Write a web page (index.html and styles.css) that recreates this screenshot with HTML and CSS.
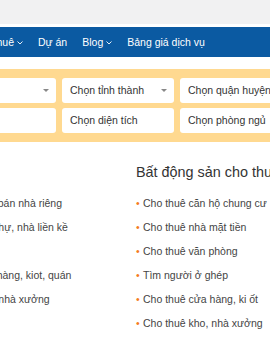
FILE: index.html
```html
<!DOCTYPE html>
<html lang="vi">
<head>
<meta charset="utf-8">
<link rel="stylesheet" href="styles.css">
</head>
<body>
<div class="topbar"></div>
<nav class="nav">
  <div class="nav-cut">
    <span class="nav-item">Nhà đất cho thuê<svg class="chev" width="6" height="4" viewBox="0 0 6 4"><path d="M0.5 0.5 L3 3 L5.5 0.5" fill="none" stroke="#fff" stroke-width="0.9"/></svg></span>
  </div>
  <span class="nav-item">Dự án</span>
  <span class="nav-item">Blog<svg class="chev" width="6" height="4" viewBox="0 0 6 4"><path d="M0.5 0.5 L3 3 L5.5 0.5" fill="none" stroke="#fff" stroke-width="0.9"/></svg></span>
  <span class="nav-item">Bảng giá dịch vụ</span>
</nav>
<section class="search">
  <div class="wrap">
    <div class="row">
      <div class="field">Loại BĐS<span class="caret"></span></div>
      <div class="field">Chọn tỉnh thành<span class="caret"></span></div>
      <div class="field">Chọn quận huyện<span class="caret"></span></div>
    </div>
    <div class="row">
      <div class="field">Mức giá</div>
      <div class="field">Chọn diện tích</div>
      <div class="field">Chọn phòng ngủ</div>
    </div>
  </div>
</section>
<section class="links">
  <div class="wrap cols">
    <div class="col col-left">
      <div class="title-space"></div>
      <ul class="list">
        <li>Mua đất, bán nhà riêng</li>
        <li>Bán biệt thự, nhà liền kề</li>
        <li>Bán đất</li>
        <li>Bán cửa hàng, kiot, quán</li>
        <li>Bán kho, nhà xưởng</li>
      </ul>
    </div>
    <div class="col">
      <h2 class="title">Bất động sản cho thuê</h2>
      <ul class="list">
        <li>Cho thuê căn hộ chung cư</li>
        <li>Cho thuê nhà mặt tiền</li>
        <li>Cho thuê văn phòng</li>
        <li>Tìm người ở ghép</li>
        <li>Cho thuê cửa hàng, ki ốt</li>
        <li>Cho thuê kho, nhà xưởng</li>
      </ul>
    </div>
  </div>
</section>
</body>
</html>
```
FILE: styles.css
```css
html, body {
  margin: 0;
  padding: 0;
  background: #fff;
  overflow: hidden;
}
body {
  font-family: "Liberation Sans", Arial, sans-serif;
  font-size: 10.5px;
  color: #333;
  width: 270px;
}
.topbar {
  height: 24px;
  background: #f1f1f2;
  margin-bottom: 3px;
}
.nav {
  height: 30px;
  background: #0b5aa2;
  display: flex;
  align-items: center;
  gap: 15px;
  color: #fff;
  font-size: 10.5px;
  white-space: nowrap;
}
.nav-cut {
  width: 23px;
  flex: none;
  display: flex;
  justify-content: flex-end;
}
.nav-item {
  display: flex;
  align-items: center;
  flex: none;
}
.chev {
  margin-left: 3px;
  margin-top: 1px;
}
.search {
  margin-top: 12px;
  background: #ffd990;
  padding: 9px 0 9px;
}
.wrap {
  margin-left: -56px;
  width: 480px;
}
.row {
  display: flex;
  gap: 6px;
}
.row + .row {
  margin-top: 5px;
}
.field {
  width: 112px;
  height: 25px;
  line-height: 25px;
  background: #fff;
  border-radius: 3px;
  padding-left: 8px;
  box-sizing: border-box;
  color: #333;
  font-size: 10.5px;
  display: flex;
  align-items: center;
  white-space: nowrap;
  overflow: hidden;
}
.caret {
  margin-left: auto;
  margin-right: 7px;
  width: 0;
  height: 0;
  border-left: 3px solid transparent;
  border-right: 3px solid transparent;
  border-top: 3px solid #888;
}
.cols {
  display: flex;
}
.col-left {
  width: 192px;
  flex: none;
  padding-left: 3px;
  box-sizing: border-box;
}
.title-space {
  height: 40px;
}
.title {
  margin: 20px 0 0;
  font-size: 14.4px;
  line-height: 20px;
  font-weight: normal;
  color: #333;
  white-space: nowrap;
}
.list {
  list-style: none;
  margin: 9px 0 0;
  padding: 0;
}
.list li {
  line-height: 24px;
  color: #444;
  white-space: nowrap;
}
.list li::before {
  content: "•";
  color: #f47b20;
  display: inline-block;
  width: 7px;
}
```
